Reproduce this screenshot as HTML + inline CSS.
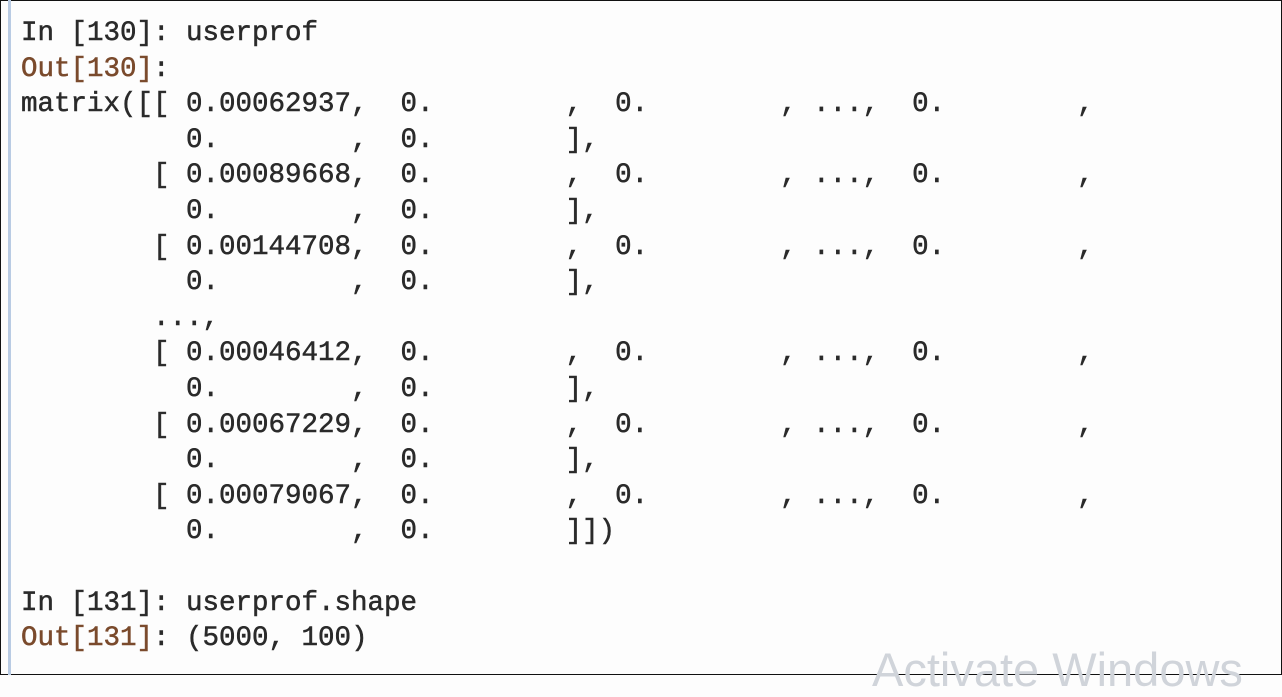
<!DOCTYPE html>
<html><head><meta charset="utf-8"><style>
html,body{margin:0;padding:0;}
body{width:1282px;height:675px;background:#fdfdfd;position:relative;overflow:hidden;}
.frame{position:absolute;left:0;top:0;width:1280px;height:673px;border:1px solid #111;}
.bar{position:absolute;left:8px;top:0;width:3px;height:675px;background:#b9cbe3;}
pre{position:absolute;left:21px;top:16px;margin:0;font-family:"Liberation Mono",monospace;font-size:27.5px;line-height:35.6px;color:#2a2a2a;font-weight:normal;-webkit-text-stroke:0.5px #2a2a2a;}
.o{color:#7a4a2c;-webkit-text-stroke:0.5px #7a4a2c;}
.aw{position:absolute;left:872px;top:642px;font-family:"Liberation Sans",sans-serif;font-size:47px;color:#d0d4da;}
</style></head><body>
<div class="frame"></div>
<div class="bar"></div>
<pre>In [130]: userprof
<span class="o">Out[130]</span>:
matrix([[ 0.00062937,  0.        ,  0.        , ...,  0.        ,
          0.        ,  0.        ],
        [ 0.00089668,  0.        ,  0.        , ...,  0.        ,
          0.        ,  0.        ],
        [ 0.00144708,  0.        ,  0.        , ...,  0.        ,
          0.        ,  0.        ],
        ...,
        [ 0.00046412,  0.        ,  0.        , ...,  0.        ,
          0.        ,  0.        ],
        [ 0.00067229,  0.        ,  0.        , ...,  0.        ,
          0.        ,  0.        ],
        [ 0.00079067,  0.        ,  0.        , ...,  0.        ,
          0.        ,  0.        ]])

In [131]: userprof.shape
<span class="o">Out[131]</span>: (5000, 100)</pre>
<div class="aw">Activate Windows</div>
</body></html>
